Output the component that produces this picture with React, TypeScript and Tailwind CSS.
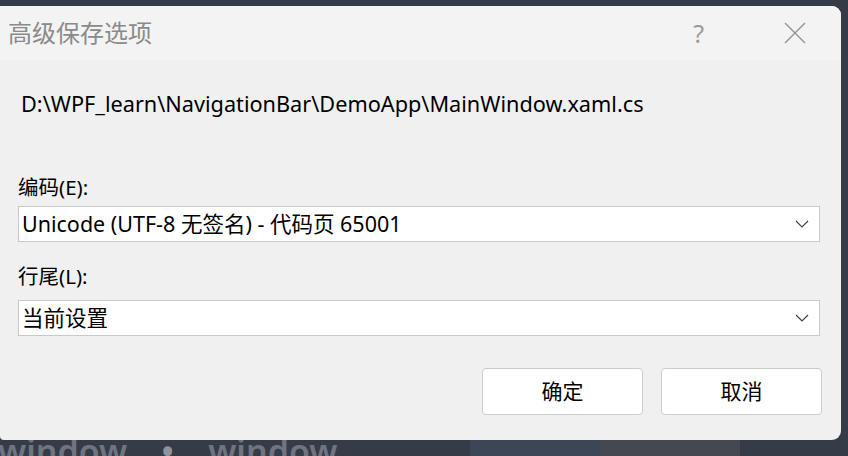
function Chevron() {
  return (
    <svg width="14" height="8" viewBox="0 0 14 8" className="text-[#444]">
      <polyline points="1,1 7,7 13,1" fill="none" stroke="currentColor" strokeWidth="1.2" />
    </svg>
  )
}

function Select({ value }: { value: string }) {
  return (
    <div className="flex h-[36px] w-[802px] items-center justify-between border border-[#c9c9c9] bg-white pl-[3px] pr-[10px]">
      <span className="text-[21.5px] leading-none text-black">{value}</span>
      <Chevron />
    </div>
  )
}

function App() {
  return (
    <div
      className="relative h-[456px] w-[848px] overflow-hidden bg-[#363b48]"
      style={{ fontFamily: '"Noto Sans", "Noto Sans CJK SC", sans-serif' }}
    >
      {/* background window text behind the dialog */}
      <div className="absolute left-[-2px] top-[426px] flex items-center gap-[34px] text-[34px] font-semibold text-[#6f7480]">
        <span>window</span>
        <span className="text-[#8f939b]">•</span>
        <span>window</span>
      </div>
      <div className="absolute left-[470px] top-[440px] h-[16px] w-[130px] bg-[#3c4656]" />
      <div className="absolute left-[600px] top-[440px] h-[16px] w-[140px] bg-[#45484f]" />

      {/* Dialog */}
      <div className="relative mt-[6px] flex h-[434px] w-[841px] flex-col overflow-hidden rounded-r-[9px] rounded-bl-[4px] bg-[#f0f0f0]">
        {/* Title bar */}
        <div className="flex h-[54px] items-center bg-[#f3f3f3] pl-[8px]">
          <span className="text-[24px] leading-none text-[#8a8a8a]">高级保存选项</span>
          <span className="ml-auto mr-[80px] text-[25px] leading-none text-[#9a9a9a]">?</span>
          <svg width="22" height="22" viewBox="0 0 22 22" className="mr-[35px] text-[#959595]">
            <line x1="1" y1="1" x2="21" y2="21" stroke="currentColor" strokeWidth="1.4" />
            <line x1="21" y1="1" x2="1" y2="21" stroke="currentColor" strokeWidth="1.4" />
          </svg>
        </div>

        {/* Body */}
        <div className="flex flex-col px-[18px]">
          <div className="mt-[30px] pl-[3px] text-[21.7px] leading-[28px] text-black">
            D:\WPF_learn\NavigationBar\DemoApp\MainWindow.xaml.cs
          </div>

          <div className="mt-[55px] text-[20.5px] leading-[28px] text-black">编码(E):</div>
          <div className="mt-[5px]">
            <Select value="Unicode (UTF-8 无签名) - 代码页 65001" />
          </div>

          <div className="mt-[20px] text-[20.5px] leading-[28px] text-black">行尾(L):</div>
          <div className="mt-[10px]">
            <Select value="当前设置" />
          </div>

          <div className="mt-[32px] flex justify-end gap-[18px] pr-[1px]">
            <button className="h-[47px] w-[161px] rounded-[4px] border border-[#cccccc] bg-white text-[21px] text-black">
              确定
            </button>
            <button className="h-[47px] w-[161px] rounded-[4px] border border-[#cccccc] bg-white text-[21px] text-black">
              取消
            </button>
          </div>
        </div>
      </div>
    </div>
  )
}

export default App
